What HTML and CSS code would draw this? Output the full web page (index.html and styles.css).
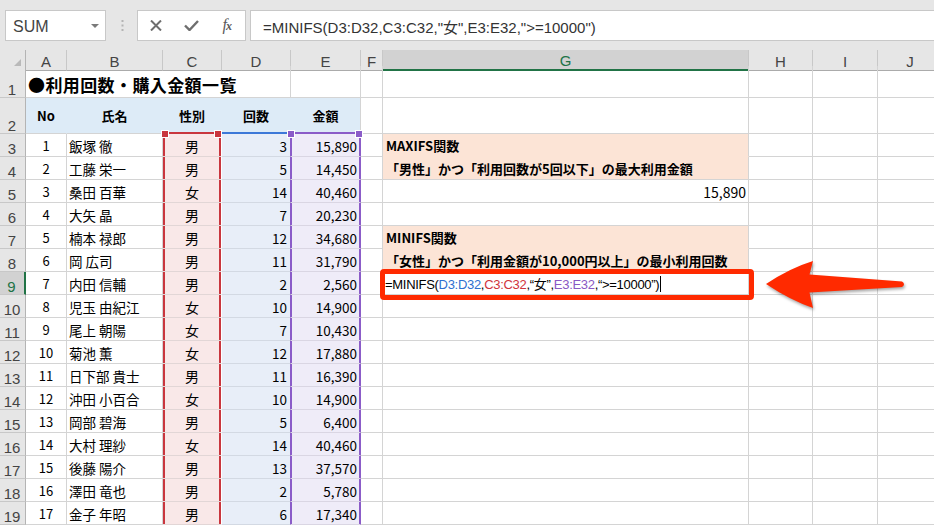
FILE: index.html
```html
<!DOCTYPE html>
<html lang="ja">
<head>
<meta charset="utf-8">
<title>MINIFS</title>
<link rel="stylesheet" href="styles.css">
</head>
<body>
<div class="app">
  <div class="toolbar">
    <div class="namebox"><span>SUM</span><span class="nb-caret"></span></div>
    <div class="grip"><svg width="3" height="11" viewBox="0 0 3 11"><rect x="0.5" y="0" width="2" height="2" fill="#b4b4b4"/><rect x="0.5" y="4.5" width="2" height="2" fill="#b4b4b4"/><rect x="0.5" y="9" width="2" height="2" fill="#b4b4b4"/></svg></div>
    <div class="fbtns">
      <div class="fbtn"><svg width="12" height="11" viewBox="0 0 12 11"><path d="M1 0.5 L11 10.5 M11 0.5 L1 10.5" stroke="#6e6e6e" stroke-width="2" fill="none"/></svg></div>
      <div class="fbtn"><svg width="15" height="11" viewBox="0 0 15 11"><path d="M1 5.5 L5.5 10 L14 1" stroke="#6e6e6e" stroke-width="2.4" fill="none"/></svg></div>
      <div class="fbtn"><span class="fx">f<span class="fxx">x</span></span></div>
    </div>
    <div class="fbar">=MINIFS(D3:D32,C3:C32,"女",E3:E32,"&gt;=10000")</div>
  </div>

  <div class="sheet">
    <div class="row hdr">
      <div class="corner"><svg width="8" height="8" viewBox="0 0 8 8"><path d="M8 0 L8 8 L0 8 Z" fill="#b9b9b9"/></svg></div>
      <div class="ch">A</div><div class="ch">B</div><div class="ch">C</div><div class="ch">D</div><div class="ch">E</div><div class="ch">F</div><div class="ch chsel">G</div><div class="ch">H</div><div class="ch">I</div><div class="ch">J</div>
    </div>

    <div class="row r1">
      <div class="rh">1</div>
      <div class="c title">●利用回数・購入金額一覧</div>
      <div class="c"></div><div class="c"></div><div class="c g"></div><div class="c"></div><div class="c"></div><div class="c"></div>
    </div>

    <div class="row r2">
      <div class="rh">2</div>
      <div class="c th">No</div><div class="c th">氏名</div><div class="c th thc">性別</div><div class="c th thd">回数</div><div class="c th the">金額</div>
      <div class="c"></div><div class="c g"></div><div class="c"></div><div class="c"></div><div class="c"></div>
    </div>

    <div class="row"><div class="rh">3</div><div class="c a">1</div><div class="c b">飯塚 徹</div><div class="c sc top">男</div><div class="c sd">3</div><div class="c se top">15,890</div><div class="c"></div><div class="c g or og1 gb">MAXIFS関数</div><div class="c"></div><div class="c"></div><div class="c"></div></div>
    <div class="row"><div class="rh">4</div><div class="c a">2</div><div class="c b">工藤 栄一</div><div class="c sc">男</div><div class="c sd">5</div><div class="c se">14,450</div><div class="c"></div><div class="c g or gb">「男性」かつ「利用回数が5回以下」の最大利用金額</div><div class="c"></div><div class="c"></div><div class="c"></div></div>
    <div class="row"><div class="rh">5</div><div class="c a">3</div><div class="c b">桑田 百華</div><div class="c sc">女</div><div class="c sd">14</div><div class="c se">40,460</div><div class="c"></div><div class="c g gnum">15,890</div><div class="c"></div><div class="c"></div><div class="c"></div></div>
    <div class="row"><div class="rh">6</div><div class="c a">4</div><div class="c b">大矢 晶</div><div class="c sc">男</div><div class="c sd">7</div><div class="c se">20,230</div><div class="c"></div><div class="c g"></div><div class="c"></div><div class="c"></div><div class="c"></div></div>
    <div class="row"><div class="rh">7</div><div class="c a">5</div><div class="c b">楠本 禄郎</div><div class="c sc">男</div><div class="c sd">12</div><div class="c se">34,680</div><div class="c"></div><div class="c g or og1 gb">MINIFS関数</div><div class="c"></div><div class="c"></div><div class="c"></div></div>
    <div class="row"><div class="rh">8</div><div class="c a">6</div><div class="c b">岡 広司</div><div class="c sc">男</div><div class="c sd">11</div><div class="c se">31,790</div><div class="c"></div><div class="c g or gb">「女性」かつ「利用金額が10,000円以上」の最小利用回数</div><div class="c"></div><div class="c"></div><div class="c"></div></div>
    <div class="row"><div class="rh rhsel">9</div><div class="c a">7</div><div class="c b">内田 信輔</div><div class="c sc">男</div><div class="c sd">2</div><div class="c se">2,560</div><div class="c"></div><div class="c g edit"><span class="fm">=MINIFS(<span class="rb">D3:D32</span>,<span class="rr">C3:C32</span>,“女”,<span class="rp">E3:E32</span>,“&gt;=10000”)</span><span class="caret"></span><span class="callout"></span></div><div class="c"></div><div class="c"></div><div class="c"></div></div>
    <div class="row"><div class="rh">10</div><div class="c a">8</div><div class="c b">児玉 由紀江</div><div class="c sc">女</div><div class="c sd">10</div><div class="c se">14,900</div><div class="c"></div><div class="c g"></div><div class="c"></div><div class="c"></div><div class="c"></div></div>
    <div class="row"><div class="rh">11</div><div class="c a">9</div><div class="c b">尾上 朝陽</div><div class="c sc">女</div><div class="c sd">7</div><div class="c se">10,430</div><div class="c"></div><div class="c g"></div><div class="c"></div><div class="c"></div><div class="c"></div></div>
    <div class="row"><div class="rh">12</div><div class="c a">10</div><div class="c b">菊池 薫</div><div class="c sc">女</div><div class="c sd">12</div><div class="c se">17,880</div><div class="c"></div><div class="c g"></div><div class="c"></div><div class="c"></div><div class="c"></div></div>
    <div class="row"><div class="rh">13</div><div class="c a">11</div><div class="c b">日下部 貴士</div><div class="c sc">男</div><div class="c sd">11</div><div class="c se">16,390</div><div class="c"></div><div class="c g"></div><div class="c"></div><div class="c"></div><div class="c"></div></div>
    <div class="row"><div class="rh">14</div><div class="c a">12</div><div class="c b">沖田 小百合</div><div class="c sc">女</div><div class="c sd">10</div><div class="c se">14,900</div><div class="c"></div><div class="c g"></div><div class="c"></div><div class="c"></div><div class="c"></div></div>
    <div class="row"><div class="rh">15</div><div class="c a">13</div><div class="c b">岡部 碧海</div><div class="c sc">男</div><div class="c sd">5</div><div class="c se">6,400</div><div class="c"></div><div class="c g"></div><div class="c"></div><div class="c"></div><div class="c"></div></div>
    <div class="row"><div class="rh">16</div><div class="c a">14</div><div class="c b">大村 理紗</div><div class="c sc">女</div><div class="c sd">14</div><div class="c se">40,460</div><div class="c"></div><div class="c g"></div><div class="c"></div><div class="c"></div><div class="c"></div></div>
    <div class="row"><div class="rh">17</div><div class="c a">15</div><div class="c b">後藤 陽介</div><div class="c sc">男</div><div class="c sd">13</div><div class="c se">37,570</div><div class="c"></div><div class="c g"></div><div class="c"></div><div class="c"></div><div class="c"></div></div>
    <div class="row"><div class="rh">18</div><div class="c a">16</div><div class="c b">澤田 竜也</div><div class="c sc">男</div><div class="c sd">2</div><div class="c se">5,780</div><div class="c"></div><div class="c g"></div><div class="c"></div><div class="c"></div><div class="c"></div></div>
    <div class="row"><div class="rh">19</div><div class="c a">17</div><div class="c b">金子 年昭</div><div class="c sc">男</div><div class="c sd">6</div><div class="c se">17,340</div><div class="c"></div><div class="c g"></div><div class="c"></div><div class="c"></div><div class="c"></div></div>
  </div>

  <svg class="arrow" width="934" height="526" viewBox="0 0 934 526">
    <path d="M766 284 Q790 268 813 261 L809.5 274.5 L902 281.5 Q906 284 902 287 L809.5 292.5 L813 308 Q790 300 766 284 Z" fill="#ff2a00"/>
  </svg>
</div>
</body>
</html>
```

FILE: styles.css
```css
* { box-sizing: border-box; margin: 0; padding: 0; }
html, body { width: 934px; height: 526px; overflow: hidden; background: #e6e6e6; }
body { font-family: "Noto Sans CJK JP", sans-serif; color: #000; }

.app { position: relative; width: 934px; height: 526px; overflow: hidden; background: #fff; }

/* toolbar */
.toolbar { height: 50px; background: #e6e6e6; display: flex; align-items: flex-start; padding: 10px 0 0 5px; }
.namebox { width: 101px; height: 31px; background: #fff; border: 1px solid #c8c8c8; display: flex; align-items: center; justify-content: space-between; padding: 2px 6px 0 7px; font: 16px "Liberation Sans", sans-serif; color: #444; }
.nb-caret { width: 0; height: 0; border-left: 4px solid transparent; border-right: 4px solid transparent; border-top: 4px solid #7a7a7a; margin-top: -2px; }
.grip { width: 31px; height: 31px; display: flex; justify-content: center; align-items: center; padding-left: 1px; }
.fbtns { width: 109px; height: 31px; background: #fff; border: 1px solid #c8c8c8; display: flex; align-items: center; padding-left: 0; }
.fbtn { width: 36px; height: 29px; display: flex; align-items: center; justify-content: center; }
.fx { font: italic 16px "Liberation Serif", serif; color: #5a5a5a; line-height: 16px; }
.fxx { font-size: 12px; font-weight: bold; margin-left: -1px; }
.fbar { flex: 1; height: 31px; margin-left: 4px; background: #fff; border: 1px solid #c8c8c8; border-right: none; display: flex; align-items: center; padding: 1px 0 0 12px; font: 15px "Liberation Sans", "Noto Sans CJK JP", sans-serif; color: #333; white-space: nowrap; }

/* sheet grid */
.sheet { background: #fff; }
.row { display: grid; grid-template-columns: 26px 41px 96px 59px 69px 70px 22px 366px 64px 65px 65px; height: 23px; }
.hdr { height: 16px; background: #e6e6e6; }
.r1 { height: 32px; }
.r2 { height: 36px; }

.corner { background: #e6e6e6; border-right: 1px solid #b4b4b4; border-bottom: 1px solid #ababab; display: flex; align-items: flex-end; justify-content: flex-end; padding: 0 4px 3px 0; }
.ch { background: #e6e6e6; border-right: 1px solid #c8c8c8; border-bottom: 1px solid #ababab; display: flex; align-items: center; justify-content: center; font: 15px "Liberation Sans", sans-serif; color: #444; padding-top: 2px; }
.chsel { background: #d2d2d2; color: #217346; border-bottom: 2px solid #217346; }

.rh { background: #e6e6e6; border-right: 1px solid #b4b4b4; border-bottom: 1px solid #c8c8c8; display: flex; align-items: flex-end; justify-content: center; font: 15px "Liberation Sans", sans-serif; color: #444; line-height: 15px; padding: 0 1px 0 0; }
.rhsel { background: #d2d2d2; color: #217346; border-right: 2px solid #217346; }

.c { border-right: 1px solid #d4d4d4; border-bottom: 1px solid #d4d4d4; display: flex; align-items: center; padding: 1px 2px 0; white-space: nowrap; font-size: 13px; min-width: 0; position: relative; }

.title { grid-column: span 4; font-size: 17px; font-weight: bold; padding: 5px 0 0 2px; letter-spacing: 0.4px; }

.th { background: #ddebf7; border-right-color: #ddebf7; justify-content: center; font-weight: bold; padding-top: 0; }
.the { border-right-color: #d4d4d4; }
.thc { border-bottom: 2px solid #c9363e; }
.thd { border-bottom: 2px solid #3c78d8; }
.the { border-bottom: 2px solid #8b5cc8; }

.a { justify-content: center; font-size: 13px; }
.b { font-size: 13.5px; padding-left: 2px; }
.sc { background: #f9e8e8; justify-content: center; font-size: 14px; border-right-color: #fff; border-bottom-color: #e2d6d6; box-shadow: inset 2px 0 0 #c9363e, inset -2px 0 0 #c9363e; }
.sd { background: #e8eef8; justify-content: flex-end; border-right-color: #8b5cc8; border-bottom-color: #d3d9e3; padding-right: 3px; font-size: 13.5px; }
.se { background: #efecf8; justify-content: flex-end; border-right-color: #8b5cc8; border-bottom-color: #dad6e3; box-shadow: inset 1px 0 0 #8b5cc8, inset -1px 0 0 #8b5cc8; padding-right: 3px; font-size: 13.5px; }

.sc.top::before, .sc.top::after, .se.top::before, .se.top::after { content: ""; position: absolute; top: -4px; width: 6px; height: 6px; border: 1px solid #fff; }
.sc.top::before { left: -2px; background: #c9363e; }
.sc.top::after { right: -1px; background: #c9363e; }
.se.top::before { left: -4px; background: #8b5cc8; }
.se.top::after { right: -3px; background: #8b5cc8; }

.g { padding-left: 3px; }
.or { background: #fce4d6; }
.og1 { border-bottom-color: #fce4d6; }
.gb { font-weight: bold; font-size: 13px; }
.gnum { justify-content: flex-end; font-size: 14px; padding-right: 2px; }

.edit { padding-left: 2px; }
.fm { font: 13px "Liberation Sans", "Noto Sans CJK JP", sans-serif; letter-spacing: -0.3px; color: #000; }
.rb { color: #2f6fcf; }
.rr { color: #d0343c; }
.rp { color: #8a58c4; }
.caret { width: 1px; height: 16px; background: #000; margin-left: 1px; }
.callout { position: absolute; top: -3px; left: -3px; right: -6px; bottom: -6px; border: 5px solid #ff2a00; border-radius: 4px; z-index: 2; }

.arrow { position: absolute; left: 0; top: 0; z-index: 3; filter: drop-shadow(1px 2px 1.5px rgba(0,0,0,0.35)); }
```
